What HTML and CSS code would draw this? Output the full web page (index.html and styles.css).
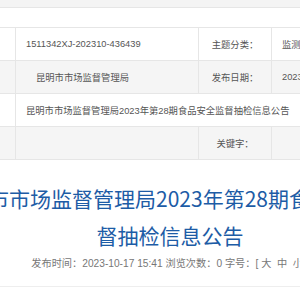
FILE: index.html
```html
<!DOCTYPE html>
<html lang="zh-CN">
<head>
    <meta charset="UTF-8">
    <meta name="viewport" content="width=device-width, initial-scale=1.0">
    <title>昆明市市场监督管理局2023年第28期食品安全监督抽检信息公告</title>
    <link rel="stylesheet" href="styles.css">
</head>
<body>

<div class="page">
    <div class="topbar"></div>
    <table class="info">
        <colgroup>
            <col class="c-label1">
            <col class="c-value">
            <col class="c-label2">
            <col class="c-value">
        </colgroup>
        <tr class="blank"><td colspan="4"></td></tr>
        <tr>
            <th>索 引 号：</th>
            <td class="val">1511342XJ-202310-436439</td>
            <th>主题分类：</th>
            <td class="val">监测抽检</td>
        </tr>
        <tr class="alt">
            <th>发布机构：</th>
            <td class="val pub">昆明市市场监督管理局</td>
            <th>发布日期：</th>
            <td class="val">2023-10-17</td>
        </tr>
        <tr>
            <th>名　　称：</th>
            <td class="val" colspan="3">昆明市市场监督管理局2023年第28期食品安全监督抽检信息公告</td>
        </tr>
        <tr class="alt">
            <th>文　　号：</th>
            <td class="val"></td>
            <th>关键字：</th>
            <td class="val"></td>
        </tr>
    </table>

    <div class="head">
        <h1 class="title">昆明市市场监督管理局2023年第28期食品安全监督抽检信息公告</h1>
        <div class="meta">发布时间：2023-10-17 15:41 浏览次数：0 字号：[ 大&nbsp;&nbsp;中&nbsp;&nbsp;小 ]</div>
    </div>
    <hr class="line">
</div>

</body>
</html>
```

FILE: styles.css
```css
html, body {
    margin: 0;
    padding: 0;
    background-color: #ffffff;
    overflow: hidden;
}
body {
    font-family: "Liberation Sans", "Noto Sans CJK SC", sans-serif;
    color: #555555;
}
.page {
    width: 600px;
    margin-left: -110px;
}
.topbar {
    height: 7px;
    background-color: #f4f4f4;
}
.info {
    width: 564px;
    border-collapse: collapse;
    font-size: 9.3px;
    table-layout: fixed;
}
.c-label1 { width: 125px; }
.c-label2 { width: 73px; }
.c-value { width: 183px; }
.info th, .info td {
    border: 1px solid #e6e6e6;
    height: 32px;
    padding: 0;
    font-weight: normal;
    color: #555555;
}
.info th {
    text-align: center;
}
.info .val {
    text-align: left;
    padding-left: 10px;
}
.info .pub {
    padding-left: 20px;
}
.info .blank td {
    height: 19px;
}
.info .alt th, .info .alt td {
    background-color: #f5f5f5;
}
.head {
    width: 560px;
    text-align: center;
}
.title {
    width: 460px;
    margin: 20px auto 0 auto;
    font-family: "Noto Sans CJK SC", sans-serif;
    font-size: 21px;
    font-weight: normal;
    line-height: 37px;
    color: #1d5ca6;
}
.meta {
    margin-top: 3px;
    font-size: 10.2px;
    line-height: 14px;
    color: #777777;
}
.line {
    margin: 15px 0 0 0;
    border: 0;
    border-top: 1px solid #eeeeee;
    width: 600px;
}
```
